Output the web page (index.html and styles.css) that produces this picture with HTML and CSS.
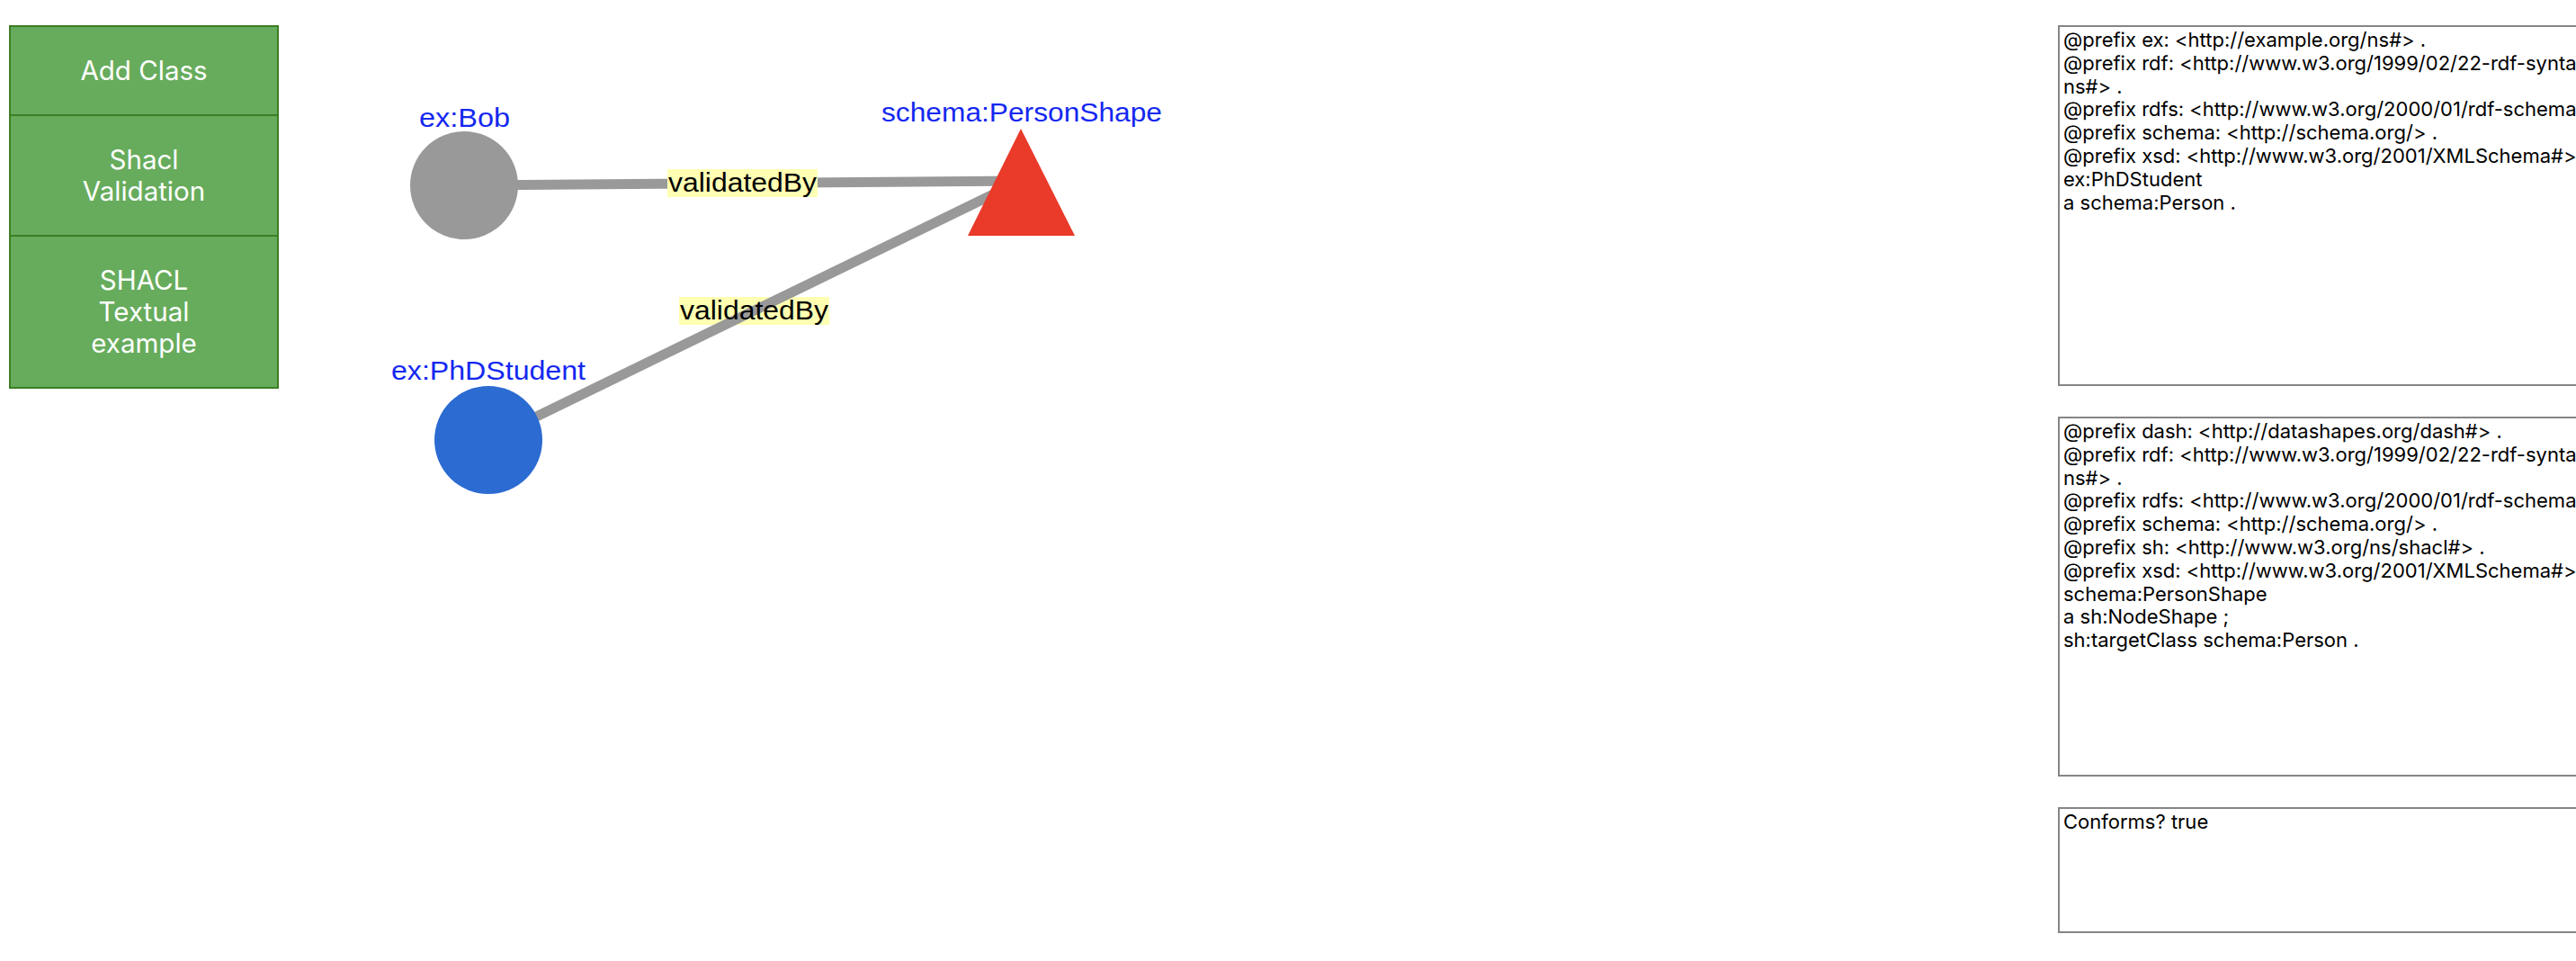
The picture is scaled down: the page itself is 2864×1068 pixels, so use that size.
FILE: index.html
```html
<!DOCTYPE html>
<html lang="en">
  <head>
    <meta charset="utf-8" />
    <meta name="viewport" content="width=device-width,initial-scale=1.0" />
    <title>SHACL playground</title>
    <link rel="stylesheet" href="styles.css">
  </head>
  <body>
    <div id="app">
      <nav class="menu">
        <button class="menu-btn" type="button">Add Class</button>
        <button class="menu-btn" type="button">Shacl Validation</button>
        <button class="menu-btn" type="button">SHACL Textual example</button>
      </nav>

      <section class="graph">
        <!-- viewBox uses page coordinates so node positions read as on screen -->
        <svg class="network" width="1978" height="560" viewBox="310 28 1978 560">
          <line class="edge" x1="516" y1="206" x2="1135" y2="201" />
          <rect class="edge-label-bg" x="742" y="188" width="167" height="31" />
          <text class="edge-label" x="825.5" y="213" textLength="165" lengthAdjust="spacingAndGlyphs">validatedBy</text>

          <rect class="edge-label-bg see-through" x="755" y="330" width="167" height="31" />
          <line class="edge" x1="543" y1="489" x2="1135" y2="201" />
          <text class="edge-label" x="838.5" y="355" textLength="165" lengthAdjust="spacingAndGlyphs">validatedBy</text>

          <circle class="node instance" cx="516" cy="206" r="60" />
          <text class="node-label" x="516.5" y="141" textLength="101" lengthAdjust="spacingAndGlyphs">ex:Bob</text>

          <circle class="node student" cx="543" cy="489" r="60" />
          <text class="node-label" x="543" y="422" textLength="216" lengthAdjust="spacingAndGlyphs">ex:PhDStudent</text>

          <polygon class="node shape" points="1135,143 1195,262 1076,262" />
          <text class="node-label" x="1136" y="135" textLength="312" lengthAdjust="spacingAndGlyphs">schema:PersonShape</text>
        </svg>
      </section>

      <aside class="editors">
        <textarea class="ttl data" spellcheck="false">@prefix ex: &lt;http://example.org/ns#&gt; .
@prefix rdf: &lt;http://www.w3.org/1999/02/22-rdf-syntax-ns#&gt; .
@prefix rdfs: &lt;http://www.w3.org/2000/01/rdf-schema#&gt; .
@prefix schema: &lt;http://schema.org/&gt; .
@prefix xsd: &lt;http://www.w3.org/2001/XMLSchema#&gt; .
ex:PhDStudent
a schema:Person .</textarea>
        <textarea class="ttl shapes" spellcheck="false">@prefix dash: &lt;http://datashapes.org/dash#&gt; .
@prefix rdf: &lt;http://www.w3.org/1999/02/22-rdf-syntax-ns#&gt; .
@prefix rdfs: &lt;http://www.w3.org/2000/01/rdf-schema#&gt; .
@prefix schema: &lt;http://schema.org/&gt; .
@prefix sh: &lt;http://www.w3.org/ns/shacl#&gt; .
@prefix xsd: &lt;http://www.w3.org/2001/XMLSchema#&gt; .
schema:PersonShape
a sh:NodeShape ;
sh:targetClass schema:Person .</textarea>
        <textarea class="ttl report" spellcheck="false">Conforms? true</textarea>
      </aside>
    </div>
  </body>
</html>
```

FILE: styles.css
```css
html,
body {
  margin: 0;
  overflow: hidden;
  background: #fff;
}
#app {
  display: flex;
  align-items: flex-start;
  padding: 28px 0 0 10px;
}

/* left menu */
.menu {
  flex: none;
  display: flex;
  flex-direction: column;
  width: 300px;
  box-sizing: border-box;
  border: 2px solid #3b7e24;
  background-color: #67ac5c;
}
.menu-btn {
  border: none;
  border-top: 2px solid #3b7e24;
  background: transparent;
  color: #fff;
  font-family: Inter, "Liberation Sans", sans-serif;
  font-size: 29.5px;
  line-height: 35px;
  padding: 31px 64px;
  text-align: center;
  cursor: pointer;
}
.menu-btn:first-child {
  border-top: none;
}

/* network canvas */
.graph {
  flex: none;
  width: 1978px;
}
.network {
  display: block;
}
.edge {
  stroke: #999;
  stroke-width: 11;
}
.edge-label-bg {
  fill: #ffffb3;
}
.edge-label-bg.see-through {
  fill: rgba(255, 255, 0, 0.3);
}
.edge-label,
.node-label {
  font-family: "Liberation Sans", Arial, sans-serif;
  font-size: 30px;
  text-anchor: middle;
}
.edge-label {
  fill: #000;
}
.node-label {
  fill: #1428f0;
}
.node.instance {
  fill: #999;
}
.node.student {
  fill: #2b6bd2;
}
.node.shape {
  fill: #ea3a2a;
}

/* turtle editors */
.editors {
  flex: none;
  display: flex;
  flex-direction: column;
  gap: 34px;
}
.ttl {
  display: block;
  box-sizing: border-box;
  width: 632px;
  margin: 0;
  padding: 2px 4px;
  border: 2px solid #858585;
  border-radius: 0;
  font-family: Inter, "Liberation Sans", sans-serif;
  font-size: 22px;
  line-height: 25.8px;
  color: #000;
  resize: none;
  outline: none;
}
.ttl.data {
  height: 401px;
}
.ttl.shapes {
  height: 400px;
}
.ttl.report {
  height: 140px;
}
```
